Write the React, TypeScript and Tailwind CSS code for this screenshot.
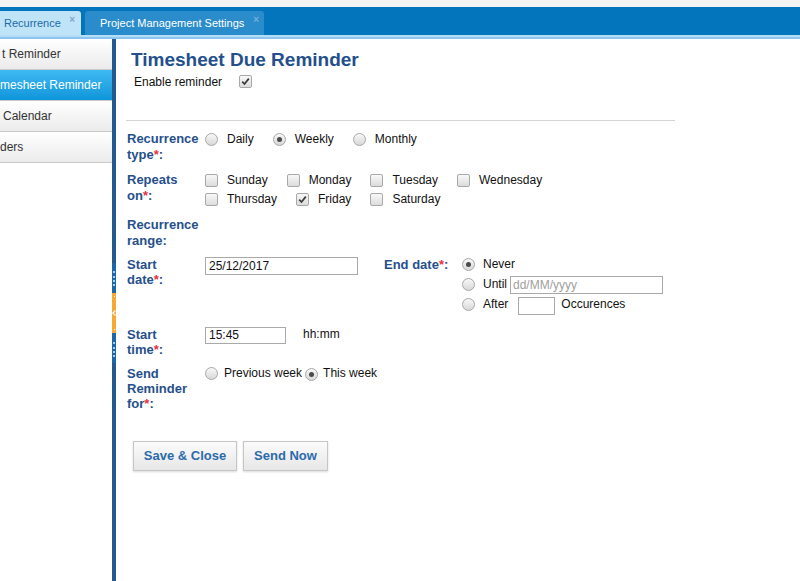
import React from 'react';

const Check = ({ checked = false }: { checked?: boolean }) => (
  <span className="inline-flex h-[13px] w-[13px] shrink-0 items-center justify-center rounded-[2px] border border-[#a8a8a8] bg-linear-to-b from-[#f8f8f8] to-[#dcdcdc]">
    {checked && (
      <svg width="9" height="9" viewBox="0 0 9 9">
        <path d="M1.2 4.6 L3.5 7 L7.8 1.6" fill="none" stroke="#3a3a3a" strokeWidth="1.7" />
      </svg>
    )}
  </span>
);

const Radio = ({ checked = false }: { checked?: boolean }) => (
  <span className="inline-flex h-[13px] w-[13px] shrink-0 items-center justify-center rounded-full border border-[#a8a8a8] bg-linear-to-b from-[#f8f8f8] to-[#d8d8d8]">
    {checked && <span className="h-[5px] w-[5px] rounded-full bg-[#4a4a4a]" />}
  </span>
);

const Label = ({ lines, className = '' }: { lines: React.ReactNode[]; className?: string }) => (
  <div className={`w-[78px] shrink-0 text-[13px] font-bold text-[#26508c] ${className}`}>
    {lines.map((l, i) => (
      <div key={i}>{l}</div>
    ))}
  </div>
);

const Req = () => <span className="text-[#e8313d]">*</span>;

const Opt = ({ label, checked, box }: { label: string; checked?: boolean; box?: boolean }) => (
  <span className="mr-[19px] inline-flex items-center">
    {box ? <Check checked={checked} /> : <Radio checked={checked} />}
    <span className="ml-[9px]">{label}</span>
  </span>
);

const navItems = [
  { text: 't Reminder', pad: 'pl-[2px]' },
  { text: 'mesheet Reminder', pad: 'pl-0', active: true },
  { text: 'Calendar', pad: 'pl-[3px]' },
  { text: 'ders', pad: 'pl-0' },
];

const App = () => {
  return (
    <div className="flex h-[581px] w-[800px] flex-col overflow-hidden bg-white font-['Liberation_Sans',Arial,sans-serif] text-[#111]">
      {/* top strip + tabs */}
      <div className="h-[7px] bg-[#f3f3f3]" />
      <div className="flex h-[28px] items-end bg-[#0275bc]">
        <div className="relative flex h-[24px] w-[81px] items-center rounded-tr-[3px] bg-[#bfe4f8] pl-[4px] text-[11px] text-[#1d6aa8]">
          Recurrence
          <span className="absolute right-[6px] top-[1px] text-[10px] font-bold text-[#7fa8cc]">×</span>
        </div>
        <div className="relative ml-[4px] flex h-[24px] w-[179px] items-center rounded-t-[3px] bg-[#2a8ccb] pl-[15px] text-[11px] text-white">
          Project Management Settings
          <span className="absolute right-[5px] top-[1px] text-[10px] font-bold text-[#6fb1df]">×</span>
        </div>
      </div>
      <div className="h-[2px] bg-[#b6ddf6]" />
      <div className="h-[2px] bg-[#8ec4f0]" />

      <div className="flex flex-1">
        {/* side nav */}
        <div className="w-[112px] shrink-0 overflow-hidden">
          {navItems.map((n) => (
            <div
              key={n.text}
              className={`flex h-[31px] items-center whitespace-nowrap border-b border-[#cacaca] text-[12px] ${n.pad} ${
                n.active
                  ? 'bg-linear-to-b from-[#3dbaf2] to-[#0c95da] text-white'
                  : 'bg-linear-to-b from-[#ffffff] to-[#ebebeb] text-[#333]'
              }`}
            >
              {n.text}
            </div>
          ))}
        </div>

        {/* splitter */}
        <div className="flex w-[4px] shrink-0 flex-col bg-[#245a8d]">
          <div className="h-[224px]" />
          <div className="flex h-[30px] items-center justify-center bg-[#1d67a6]">
            <div className="h-[15px] w-[2px] border-l-2 border-dotted border-[#a9cdee]" />
          </div>
          <div className="flex h-[40px] flex-col items-center justify-between bg-[#f6a832] py-[3px]">
            <span className="h-px w-px bg-white" />
            <svg width="4" height="6" viewBox="0 0 4 6">
              <path d="M3.5 0.5 L0.8 3 L3.5 5.5" fill="none" stroke="#fff" strokeWidth="1.2" />
            </svg>
            <span className="h-px w-px bg-white" />
          </div>
          <div className="flex h-[30px] items-start justify-center bg-[#1d67a6] pt-[9px]">
            <div className="h-[15px] w-[2px] border-l-2 border-dotted border-[#a9cdee]" />
          </div>
        </div>

        {/* content */}
        <div className="flex-1 pl-[11px] pt-[10px] text-[12px]">
          <h1 className="ml-[4px] text-[19px] font-bold leading-[22px] text-[#234f8c]">
            Timesheet Due Reminder
          </h1>
          <div className="ml-[7px] mt-[3px] flex h-[16px] items-center">
            <span>Enable reminder</span>
            <span className="ml-[17px]">
              <Check checked />
            </span>
          </div>
          <div className="-ml-px mt-[30px] h-px w-[549px] bg-[#d4d4d4]" />

          {/* recurrence type */}
          <div className="mt-[10px] flex leading-[16px]">
            <Label lines={['Recurrence', <>type<Req />:</>]} />
            <div className="flex h-[16px] items-center">
              <Opt label="Daily" />
              <Opt label="Weekly" checked />
              <Opt label="Monthly" />
            </div>
          </div>

          {/* repeats on */}
          <div className="mt-[9px] flex leading-[16px]">
            <Label lines={['Repeats', <>on<Req />:</>]} />
            <div className="flex flex-col gap-[3px]">
              <div className="flex h-[16px] items-center">
                <Opt box label="Sunday" />
                <Opt box label="Monday" />
                <Opt box label="Tuesday" />
                <Opt box label="Wednesday" />
              </div>
              <div className="flex h-[16px] items-center">
                <Opt box label="Thursday" />
                <Opt box label="Friday" checked />
                <Opt box label="Saturday" />
              </div>
            </div>
          </div>

          {/* recurrence range */}
          <div className="mt-[10px] flex leading-[16px]">
            <Label lines={['Recurrence', 'range:']} />
          </div>

          {/* start date / end date */}
          <div className="mt-[8px] flex leading-[15px]">
            <Label lines={['Start', <>date<Req />:</>]} />
            <div className="flex h-[18px] w-[153px] items-center border border-[#a9a9a9] pl-[3px]">25/12/2017</div>
            <Label className="ml-[26px]" lines={[<>End date<Req />:</>]} />
            <div className="-mt-[3px] flex flex-col">
              <div className="flex h-[20px] items-center">
                <Radio checked />
                <span className="ml-[8px]">Never</span>
              </div>
              <div className="flex h-[20px] items-center">
                <Radio />
                <span className="ml-[8px]">Until</span>
                <div className="ml-[3px] mt-[2px] flex h-[18px] w-[153px] items-center border border-[#a9a9a9] pl-[2px] text-[#a0a0a0]">
                  dd/MM/yyyy
                </div>
              </div>
              <div className="flex h-[20px] items-center">
                <Radio />
                <span className="ml-[8px]">After</span>
                <div className="ml-[10px] mt-[4px] h-[18px] w-[37px] border border-[#a9a9a9]" />
                <span className="ml-[6px]">Occurences</span>
              </div>
            </div>
          </div>

          {/* start time */}
          <div className="mt-[13px] flex leading-[15px]">
            <Label lines={['Start', <>time<Req />:</>]} />
            <div className="flex h-[17px] w-[81px] items-center border border-[#a9a9a9] pl-[3px]">15:45</div>
            <span className="ml-[17px]">hh:mm</span>
          </div>

          {/* send reminder for */}
          <div className="mt-[9px] flex leading-[15px]">
            <Label lines={['Send', 'Reminder', <>for<Req />:</>]} />
            <div className="flex h-[15px] items-center">
              <Radio />
              <span className="ml-[6px]">Previous week</span>
              <span className="ml-[3px]">
                <Radio checked />
              </span>
              <span className="ml-[5px]">This week</span>
            </div>
          </div>

          {/* buttons */}
          <div className="ml-[6px] mt-[30px] flex gap-[6px]">
            <button className="h-[30px] w-[104px] border border-[#c6c6c6] bg-linear-to-b from-[#fbfbfb] to-[#e7e7e7] text-[13px] font-bold text-[#2b6aab] shadow-[0_1px_2px_rgba(0,0,0,0.15)]">
              Save &amp; Close
            </button>
            <button className="h-[30px] w-[85px] border border-[#c6c6c6] bg-linear-to-b from-[#fbfbfb] to-[#e7e7e7] text-[13px] font-bold text-[#2b6aab] shadow-[0_1px_2px_rgba(0,0,0,0.15)]">
              Send Now
            </button>
          </div>
        </div>
      </div>
    </div>
  );
};

export default App;
